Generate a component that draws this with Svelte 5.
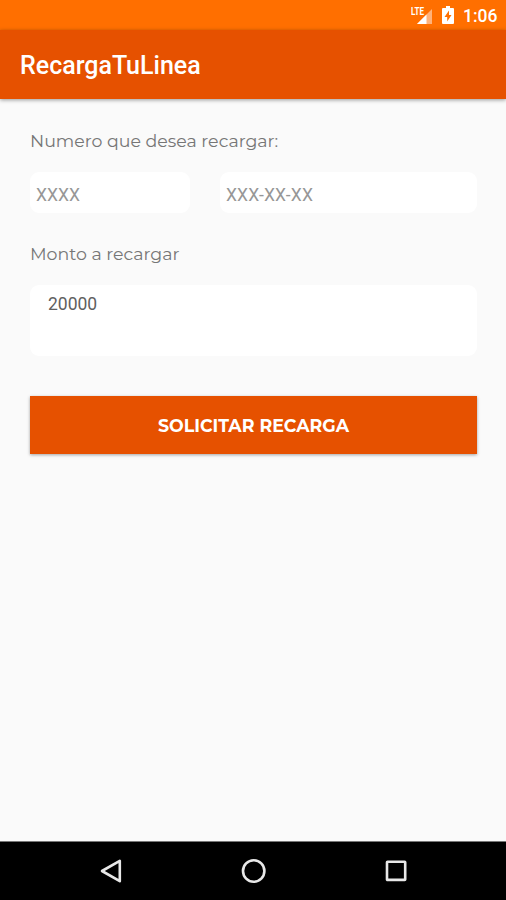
<script lang="ts">
  let prefix: string = '';
  let number: string = '';
  let amount: string = '20000';
</script>

<div class="screen">
  <div class="status-bar">
    <svg class="signal" width="22" height="20" viewBox="0 0 22 20">
      <path d="M21 4V19H6Z" fill="#ffb27a" />
      <path d="M15.5 9.5V19H6Z" fill="#fff" />
      <text x="0" y="10" textLength="13" lengthAdjust="spacingAndGlyphs">LTE</text>
    </svg>
    <svg class="battery" width="12" height="18" viewBox="0 0 12 18">
      <path d="M4 0h4v2h3q1 0 1 1v14q0 1-1 1H1q-1 0-1-1V3q0-1 1-1h3z" fill="#fff" />
      <path d="M7 4.5L2.5 11H5.2V15.5L9.5 9H7z" fill="#ff6f00" />
    </svg>
    <span class="clock">1:06</span>
  </div>

  <header class="toolbar">
    <span class="title">RecargaTuLinea</span>
  </header>

  <main class="content">
    <label class="label" for="prefix"><span>Numero que desea recargar:</span></label>
    <div class="row">
      <input id="prefix" class="field" placeholder="XXXX" bind:value={prefix} />
      <input class="field number" placeholder="XXX-XX-XX" bind:value={number} />
    </div>

    <div class="label monto"><span>Monto a recargar</span></div>
    <div class="amount">{amount}</div>

    <button class="submit">SOLICITAR RECARGA</button>
  </main>

  <nav class="nav-bar">
    <svg width="24" height="26" viewBox="0 0 24 26">
      <path d="M20.8 2.8V23.2L3 13Z" />
    </svg>
    <svg width="26" height="26" viewBox="0 0 26 26">
      <circle cx="12.7" cy="13" r="10.7" />
    </svg>
    <svg width="24" height="26" viewBox="0 0 24 26">
      <rect x="3" y="3.7" width="18.2" height="18.2" rx="0.5" />
    </svg>
  </nav>
</div>

<style>
  :global(body) {
    margin: 0;
  }

  .screen {
    display: flex;
    flex-direction: column;
    width: 506px;
    height: 900px;
    overflow: hidden;
    background: #fafafa;
    font-family: Roboto, sans-serif;
  }

  .status-bar {
    display: flex;
    flex: none;
    align-items: center;
    box-sizing: border-box;
    height: 30px;
    padding-left: 411px;
    background: #ff6f00;
    color: #fff;
  }

  .signal {
    margin-top: -1px;
  }

  .signal text {
    fill: #fff;
    font: 700 11px Roboto, sans-serif;
  }

  .battery {
    margin-left: 9px;
  }

  .clock {
    margin: 2px 0 0 9px;
    font-size: 17.5px;
    font-weight: 500;
  }

  .toolbar {
    display: flex;
    flex: none;
    align-items: center;
    box-sizing: border-box;
    height: 69px;
    padding: 2px 0 0 20px;
    background: #e65100;
    box-shadow: 0 1px 4px rgba(0, 0, 0, 0.4);
    color: #fff;
  }

  .title {
    font-size: 25px;
    font-weight: 500;
  }

  .content {
    display: flex;
    flex: 1;
    flex-direction: column;
    padding: 31px 29px 0 30px;
  }

  .label {
    height: 22px;
    font-family: Montserrat, Inter, sans-serif;
    font-size: 17.4px;
    font-weight: 400;
    line-height: 22px;
    color: #767676;
    white-space: nowrap;
  }

  .monto {
    margin-top: 30px;
  }

  .row {
    display: grid;
    grid-template-columns: 160px 257px;
    gap: 30px;
    margin-top: 20px;
  }

  .field {
    box-sizing: border-box;
    width: 100%;
    height: 41px;
    padding: 4px 6px 0;
    border: 0;
    border-radius: 9px;
    outline: 0;
    background: #fff;
    color: #555;
    font: 17.5px Roboto, sans-serif;
  }

  .number {
    letter-spacing: 0.15px;
  }

  .field::placeholder {
    color: #969696;
    opacity: 1;
  }

  .amount {
    box-sizing: border-box;
    height: 71px;
    margin-top: 20px;
    padding: 7px 18px;
    border-radius: 9px;
    background: #fff;
    color: #606060;
    font-size: 17.5px;
    line-height: 24px;
  }

  .submit {
    height: 58px;
    margin-top: 40px;
    padding: 1px 0 0;
    border: 0;
    background: #e65100;
    box-shadow: 0 1px 3px rgba(0, 0, 0, 0.35);
    color: #fff;
    font-family: Montserrat, Inter, sans-serif;
    font-size: 17.4px;
    font-weight: 700;
  }

  .nav-bar {
    display: flex;
    flex: none;
    align-items: center;
    justify-content: space-between;
    box-sizing: border-box;
    height: 59px;
    padding: 0 98px 1px 99px;
    border-top: 1px solid #777;
    background: #000;
  }

  .nav-bar svg {
    fill: none;
    stroke: #e8e8e8;
    stroke-width: 2.6;
    stroke-linejoin: round;
  }
</style>
